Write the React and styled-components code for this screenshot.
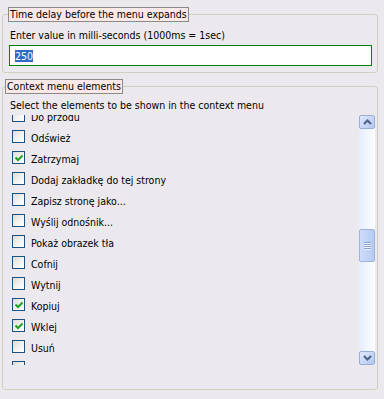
import React, { useLayoutEffect, useRef } from 'react'
import styled, { createGlobalStyle } from 'styled-components'

const GlobalStyle = createGlobalStyle`
    html, body {
        margin: 0;
        padding: 0;
        background: #ebe9ed;
    }
    body {
        font-family: "DejaVu Sans Condensed", "DejaVu Sans", "Liberation Sans", sans-serif;
        font-stretch: condensed;
        font-size: 10.5px;
        color: #000;
    }
`

const Page = styled.div`
    display: flex;
    flex-direction: column;
    gap: 6px;
    width: 376px;
    padding: 7px 0 0 2px;
`
const Group = styled.fieldset`
    margin: 0;
    min-width: 0;
    padding: ${p => p.$pad};
    border: 1px solid #d0d0bf;
    border-radius: 3px;
`
const Legend = styled.legend`
    margin-left: -1px;
    padding: 0 1px;
    height: 13px;
    line-height: 13px;
    border: 1px solid #8a8a8a;
    background: #fde8e8;
    white-space: nowrap;
`
const Caption = styled.div`
    height: 14px;
    line-height: 14px;
    margin: ${p => p.$margin};
    white-space: nowrap;
`
const TextInput = styled.input`
    display: block;
    box-sizing: border-box;
    width: 100%;
    height: 21px;
    margin: 3px 0 0;
    padding: 0 0 0 5px;
    border: 1px solid #008000;
    background: #fff;
    font: inherit;
    color: #000;
    outline: none;
    &::selection {
        background: #316ac5;
        color: #fff;
    }
`
const ListBox = styled.div`
    display: flex;
    height: 250px;
    margin-top: 3px;
`
const Viewport = styled.div`
    flex: 1;
    overflow: hidden;
`
const Row = styled.label`
    display: flex;
    align-items: center;
    gap: 6px;
    height: 21px;
    padding-left: 6px;
    line-height: 14px;
    white-space: nowrap;
`
const Name = styled.span`
    padding-top: 2px;
`
const Box = styled.span`
    position: relative;
    box-sizing: border-box;
    width: 13px;
    height: 13px;
    flex: none;
    border: 1px solid #1c5180;
    background: linear-gradient(135deg, #dcdcd7 0%, #f4f4f1 60%, #fff 100%);
`
const Tick = styled.svg`
    position: absolute;
    left: 2px;
    top: 2px;
`
const ScrollBar = styled.div`
    display: flex;
    flex-direction: column;
    width: 16px;
    margin-right: 2px;
    background: linear-gradient(90deg, #e5eefd 0%, #f3f7fe 60%, #fcfdff 100%);
`
const ArrowButton = styled.div`
    box-sizing: border-box;
    height: 14px;
    display: flex;
    align-items: center;
    justify-content: center;
    border: 1px solid #98aed6;
    border-radius: 2px;
    background: linear-gradient(135deg, #dfe9fd 0%, #c4d4f6 60%, #b4c8f2 100%);
`
const Track = styled.div`
    flex: 1;
    display: flex;
    flex-direction: column;
    padding-top: ${p => p.$top}px;
`
const Thumb = styled.div`
    box-sizing: border-box;
    height: 33px;
    display: flex;
    flex-direction: column;
    align-items: center;
    justify-content: center;
    gap: 1px;
    border: 1px solid #9fb3da;
    border-radius: 2px;
    background: linear-gradient(90deg, #cfdcf9 0%, #c2d3f7 50%, #b6caf3 100%);
`
const Grip = styled.span`
    width: 7px;
    height: 1px;
    background: #8aa0cc;
    box-shadow: 0 1px 0 #eef3fd;
`

const items = [
    ['Wstecz', false],
    ['Do przodu', false],
    ['Odśwież', false],
    ['Zatrzymaj', true],
    ['Dodaj zakładkę do tej strony', false],
    ['Zapisz stronę jako...', false],
    ['Wyślij odnośnik...', false],
    ['Pokaż obrazek tła', false],
    ['Cofnij', false],
    ['Wytnij', false],
    ['Kopiuj', true],
    ['Wklej', true],
    ['Usuń', false],
    ['Zaznacz wszystko', false],
    ['Pokaż źródło strony', false],
]

function Check({ checked }) {
    return (
        <Box>
            {checked && (
                <Tick width="8" height="8" viewBox="0 0 8 8">
                    <path d="M0.5 3.5 L3 6 L7.5 1.5" fill="none" stroke="#21a121" strokeWidth="2" />
                </Tick>
            )}
        </Box>
    )
}

function Chevron({ up }) {
    return (
        <svg width="9" height="6" viewBox="0 0 9 6">
            <path d={up ? 'M1 5 L4.5 1.5 L8 5' : 'M1 1 L4.5 4.5 L8 1'} fill="none" stroke="#4d6185" strokeWidth="2" />
        </svg>
    )
}

export default function App() {
    const view = useRef(null)
    const input = useRef(null)

    useLayoutEffect(() => {
        view.current.scrollTop = 31
        input.current.focus()
        input.current.select()
    }, [])

    return (
        <Page>
            <GlobalStyle />
            <Group $pad="0 5px 6px 6px">
                <Legend>Time delay before the menu expands</Legend>
                <Caption $margin="6px 0 0 1px">Enter value in milli-seconds (1000ms = 1sec)</Caption>
                <TextInput ref={input} defaultValue="250" />
            </Group>
            <Group $pad="0 0 24px 3px">
                <Legend>Context menu elements</Legend>
                <Caption $margin="4px 0 0 4px">Select the elements to be shown in the context menu</Caption>
                <ListBox>
                    <Viewport ref={view}>
                        {items.map(([name, on]) => (
                            <Row key={name}>
                                <Check checked={on} />
                                <Name>{name}</Name>
                            </Row>
                        ))}
                    </Viewport>
                    <ScrollBar>
                        <ArrowButton><Chevron up /></ArrowButton>
                        <Track $top={100}>
                            <Thumb>
                                <Grip /><Grip /><Grip /><Grip />
                            </Thumb>
                        </Track>
                        <ArrowButton><Chevron /></ArrowButton>
                    </ScrollBar>
                </ListBox>
            </Group>
        </Page>
    )
}
